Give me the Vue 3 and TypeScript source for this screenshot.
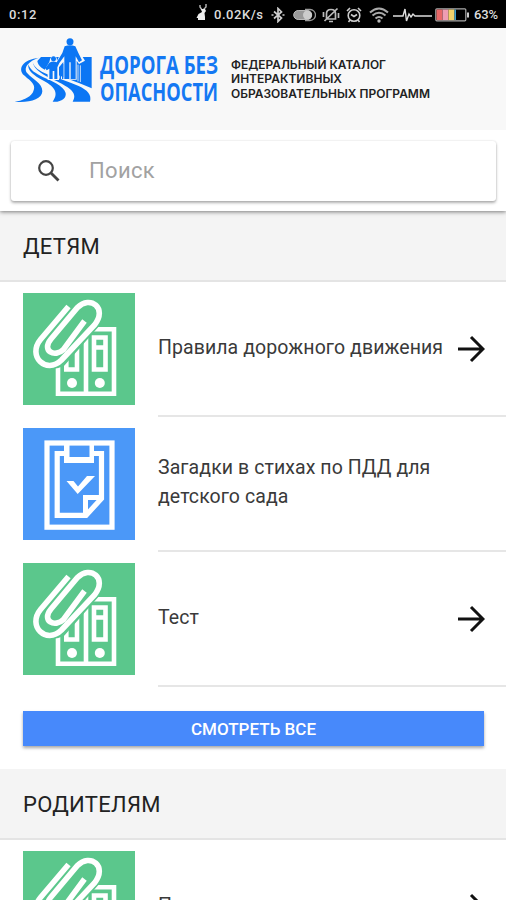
<script setup lang="ts">
interface Item {
  title: string
  icon: 'folders' | 'checklist'
  arrow: boolean
}
interface Section {
  title: string
  items: Item[]
  more: boolean
}

const sections: Section[] = [
  {
    title: 'ДЕТЯМ',
    items: [
      { title: 'Правила дорожного движения', icon: 'folders', arrow: true },
      { title: 'Загадки в стихах по ПДД для детского сада', icon: 'checklist', arrow: false },
      { title: 'Тест', icon: 'folders', arrow: true },
    ],
    more: true,
  },
  {
    title: 'РОДИТЕЛЯМ',
    items: [{ title: 'Правила', icon: 'folders', arrow: true }],
    more: false,
  },
]
</script>

<template>
  <div class="screen">
    <div class="status">
      <span class="clock">0:12</span>
      <div class="tray">
        <svg class="rabbit" width="14" height="20" viewBox="0 0 14 20">
          <path d="M7 8L5 5V3M8 8L11 5V2" fill="none" stroke="#bbb" stroke-width="1.4" />
          <path d="M6 7h4l1 2-1.5 2 .5 4v3H3v-2H1.500l2-4 3.500-2z" fill="#eee" />
        </svg>
        <span class="speed">0.02K/s</span>
        <svg class="bt" width="14" height="16" viewBox="0 0 14 16">
          <path d="M3 4.500l7.500 6.500-3.500 3.500v-13l3.500 3.500-7.500 6.500M.5 8h2M11.500 8h2" fill="none" stroke="#ccc" stroke-width="1.7" />
        </svg>
        <svg class="toggle" width="23" height="14" viewBox="0 0 23 14">
          <path d="M12 1.5h5a5.5 5.5 0 0 1 0 11h-5" fill="none" stroke="#999" stroke-width="1.3" />
          <rect x=".7" y="2.5" width="18" height="9" rx="4.5" fill="#999" stroke="#bbb" />
          <circle cx="14.5" cy="7" r="4.5" fill="#ccc" />
        </svg>
        <svg class="mute" width="18" height="16" viewBox="0 0 18 16">
          <path d="M4.500 12V6.500q0-4 4.500-4t4.500 4V12zM7 14.500h4M2.500 14L15.500 1.500M1.500 5v5M16.500 6v5" fill="none" stroke="#bbb" stroke-width="1.7" />
        </svg>
        <svg class="alarm" width="16" height="16" viewBox="0 0 16 16">
          <circle cx="8" cy="8.5" r="5.8" fill="none" stroke="#ccc" stroke-width="1.6" />
          <path d="M1 4l3-3M15 4l-3-3M5 7.5l3 2 3-2M4 13l-1.5 2M12 13l1.5 2" fill="none" stroke="#ccc" stroke-width="1.6" />
        </svg>
        <svg class="wifi" width="20" height="16" viewBox="0 0 20 16">
          <path d="M1 5.5q9-8 18 0M3.500 8.500q6.500-5.500 13 0M6.500 11.500q3.500-3 7 0" fill="none" stroke="#aaa" stroke-width="2.1" />
          <circle cx="10" cy="14" r="1.7" fill="#bbb" />
        </svg>
        <svg class="pulse" width="39" height="16" viewBox="0 0 39 16">
          <path d="M0 9h10l2-7 1.500 12 2.500-7 2 3 2-3 2 2h17" fill="none" stroke="#ddd" stroke-width="1.4" />
        </svg>
        <svg class="battery" width="34" height="14" viewBox="0 0 34 14">
          <rect x=".8" y=".8" width="30" height="12" rx="1" fill="#000" stroke="#aaa" stroke-width="1.2" />
          <path d="M1.5 1.5h6v10.6h-6z" fill="#e86868" />
          <path d="M7.5 1.5h6v10.6h-6z" fill="#ef9db3" />
          <path d="M13.5 1.5h6v10.6h-6z" fill="#f1d26c" />
          <path d="M19.5 1.5h1.5v10.6h-1.5z" fill="#3c9fd0" />
          <path d="M32 4.5h2v5h-2z" fill="#ccc" />
        </svg>
        <span class="percent">63%</span>
      </div>
    </div>

    <header class="brand">
      <svg class="mark" width="90" height="75" viewBox="0 0 270 225">
        <g fill="#0b76f4">
          <path d="M93 75H245V169C205 152 160 136 122 121C98 112 84 102 82 87Z" />
          <path d="M88 77C38 82 22 110 42 130C62 148 82 158 68 182C58 197 36 206 14 209C56 213 96 203 97 178C97 153 68 143 52 124C38 106 58 86 88 77Z" />
          <path d="M55 97C52 118 72 130 98 145C128 161 150 180 128 209C152 212 170 199 167 183C160 161 126 148 100 136C76 124 60 114 55 97Z" />
          <path d="M67 88C72 116 102 130 134 145C170 163 207 180 188 209H240C246 188 232 174 206 162C174 148 140 138 112 127C88 117 72 107 67 88Z" />
        </g>
        <path d="M163 42Q180 33 198 43L225 86L207 96L200 86V143H160V90L147 106V144H113V122L104 114L118 90Q122 70 131 70Q140 71 141 86Z" fill="#f8f8f8" />
        <g fill="#0b76f4">
          <circle cx="130.500" cy="80" r="7.500" />
          <circle cx="180" cy="29" r="10.500" />
          <path d="M164 43Q180 37 196 43Q204 62 216 85L207 91L197 73V141H182V91H178V141H163V73L148 93L142 106V141H133V117H128V141H118V110L110 115L106 109L118 92Q130 86 140 91L157 63Z" />
          <path d="M149 104H153V141H149ZM156 96H160V141H156Z" />
        </g>
        <path d="M204 98V148M211 100V150" stroke="#f8f8f8" stroke-width="2.500" />
      </svg>
      <svg class="wordmark" width="340" height="60" viewBox="0 0 340 60">
        <g class="name">
          <text x="0" y="24" textLength="118" lengthAdjust="spacingAndGlyphs">ДОРОГА БЕЗ</text>
          <text x="0" y="50.5" textLength="118" lengthAdjust="spacingAndGlyphs">ОПАСНОСТИ</text>
        </g>
        <g class="tagline">
          <text x="131" y="18.500" textLength="155" lengthAdjust="spacingAndGlyphs">ФЕДЕРАЛЬНЫЙ КАТАЛОГ</text>
          <text x="131" y="33" textLength="111" lengthAdjust="spacingAndGlyphs">ИНТЕРАКТИВНЫХ</text>
          <text x="131" y="47.500" textLength="199" lengthAdjust="spacingAndGlyphs">ОБРАЗОВАТЕЛЬНЫХ ПРОГРАММ</text>
        </g>
      </svg>
    </header>

    <div class="search-bar">
      <label class="search-box">
        <svg width="24" height="24" viewBox="0 0 24 24">
          <circle cx="9" cy="9" r="6.8" fill="none" stroke="#444" stroke-width="2.2" />
          <path d="M14 14l7.5 7.5" stroke="#444" stroke-width="2.8" />
        </svg>
        <span class="placeholder">Поиск</span>
      </label>
    </div>

    <section v-for="section in sections" :key="section.title">
      <h2 class="heading">{{ section.title }}</h2>
      <div v-for="item in section.items" :key="item.title" class="row">
        <svg v-if="item.icon === 'folders'" class="thumb" width="112" height="112" viewBox="0 0 112 112">
          <rect width="112" height="112" fill="#5bc78c" />
          <g fill="none" stroke="#fff" stroke-width="4.6">
            <path d="M35 70V100.7H91V36.3H63V100.7" />
            <path d="M71 44.5H82.5V76.5H71ZM71 54.5H82.5M43.3 50V76.5H54V50" />
          </g>
          <circle cx="49" cy="90" r="5" fill="#fff" />
          <circle cx="76.8" cy="90" r="5" fill="#fff" />
          <path d="M16 46.5L54 14Q76 5 76 25L38 68Q24 75 15 63Z" fill="#5bc78c" stroke="#5bc78c" stroke-width="11" />
          <path d="M45.5 13.5L17.5 46.5C4 63 23 82 38.5 67L71.500 32C85 15 67 2 54.5 14.5L28 46C18 58 32 65 40.5 56.5L61.5 28" fill="none" stroke="#fff" stroke-width="5.6" />
        </svg>
        <svg v-else class="thumb" width="112" height="112" viewBox="0 0 112 112">
          <rect width="112" height="112" fill="#4b98f8" />
          <rect x="24" y="15" width="65" height="84.2" fill="none" stroke="#fff" stroke-width="5.2" />
          <path d="M41 25.5H34.2V87.4H63L78.5 70.5V25.5H71" fill="none" stroke="#fff" stroke-width="5.2" />
          <path d="M62.5 87V69.5H78.5" fill="none" stroke="#fff" stroke-width="5" />
          <path d="M41 17V35H71V17H66.5V29H46.5V17Z" fill="#fff" />
          <path d="M43.5 53H50.5L55 58.5L64 48H72L54.7 66Z" fill="#fff" />
        </svg>
        <div class="cell">
          <span class="title">{{ item.title }}</span>
          <svg v-if="item.arrow" class="arrow" width="28" height="28" viewBox="0 0 28 28">
            <path d="M1 14H26M14 2L26 14L14 26" fill="none" stroke="#111" stroke-width="3" />
          </svg>
        </div>
      </div>
      <button v-if="section.more" class="more">СМОТРЕТЬ ВСЕ</button>
    </section>
  </div>
</template>

<style>
body {
  margin: 0;
  background: #fff;
  overflow: hidden;
}
</style>

<style scoped>
.screen {
  width: 506px;
  height: 900px;
  overflow: hidden;
  background: #fff;
  font-family: Roboto, "Liberation Sans", sans-serif;
}
.status {
  height: 28px;
  box-sizing: border-box;
  padding: 1px 8px 0 9px;
  display: flex;
  align-items: center;
  justify-content: space-between;
  background: #000;
  color: #ddd;
  font-size: 13px;
  font-weight: 500;
}
.tray {
  display: flex;
  align-items: center;
}
.rabbit { margin: -5px 5px 0 0; }
.speed { width: 57px; white-space: nowrap; letter-spacing: 0.55px; }
.bt { margin-right: 8px; }
.toggle { margin-right: 6px; }
.mute { margin-right: 6px; }
.alarm { margin-right: 7px; }
.wifi { margin-right: 4px; }
.pulse { margin-right: 3px; }
.battery { margin-right: 5px; }
.percent { width: 24px; letter-spacing: -0.1px; }
.clock { letter-spacing: 0.6px; }
.brand {
  height: 102px;
  box-sizing: border-box;
  padding: 4px 0 0 10px;
  display: flex;
  background: #f8f8f8;
}
.mark { flex: none; }
.wordmark {
  flex: none;
  margin-top: 18px;
  overflow: visible;
}
.name {
  font: 700 25px "Open Sans", sans-serif;
  fill: #1478f3;
}
.tagline {
  font: 600 11.5px Inter, "Open Sans", sans-serif;
  fill: #222;
}
.search-bar {
  position: relative;
  z-index: 1;
  height: 81px;
  box-sizing: border-box;
  padding: 11px 10px 10px 11px;
  background: #fff;
  box-shadow: 0 1px 4px rgba(0, 0, 0, 0.5);
  clip-path: inset(0 0 -8px 0);
}
.search-box {
  height: 60px;
  display: flex;
  align-items: center;
  gap: 28px;
  box-sizing: border-box;
  padding-left: 26px;
  border-radius: 3px;
  background: #fff;
  box-shadow: 0 2px 3px rgba(0, 0, 0, 0.3), 0 0 2px rgba(0, 0, 0, 0.15);
  color: #a2a2a2;
  font-size: 22px;
  letter-spacing: 0.35px;
}
.placeholder { padding-bottom: 2px; }
.heading {
  height: 71px;
  box-sizing: border-box;
  margin: 0;
  padding-left: 23px;
  border-bottom: 2px solid #e4e4e4;
  background: #f4f4f4;
  color: #222;
  font-size: 22px;
  font-weight: 400;
  letter-spacing: 0.3px;
  line-height: 71px;
}
.row {
  height: 135px;
  display: flex;
  gap: 23px;
  padding-left: 23px;
}
.thumb {
  flex: none;
  margin-top: 11px;
}
.cell {
  flex: 1;
  display: flex;
  align-items: center;
  justify-content: space-between;
  box-sizing: border-box;
  padding-right: 21px;
  border-bottom: 2px solid #e6e6e6;
}
.title {
  max-width: 292px;
  padding-bottom: 3px;
  color: #3a3a3a;
  font-size: 19.5px;
  letter-spacing: 0.08px;
  line-height: 29px;
}
.arrow { flex: none; }
.more {
  display: block;
  width: 461px;
  height: 35px;
  margin: 24px 0 23px 23px;
  padding: 0;
  border: 0;
  background: #4789fb;
  box-shadow: 0 2px 3px rgba(0, 0, 0, 0.35);
  color: #fff;
  font: 500 17px Roboto, sans-serif;
}
</style>
